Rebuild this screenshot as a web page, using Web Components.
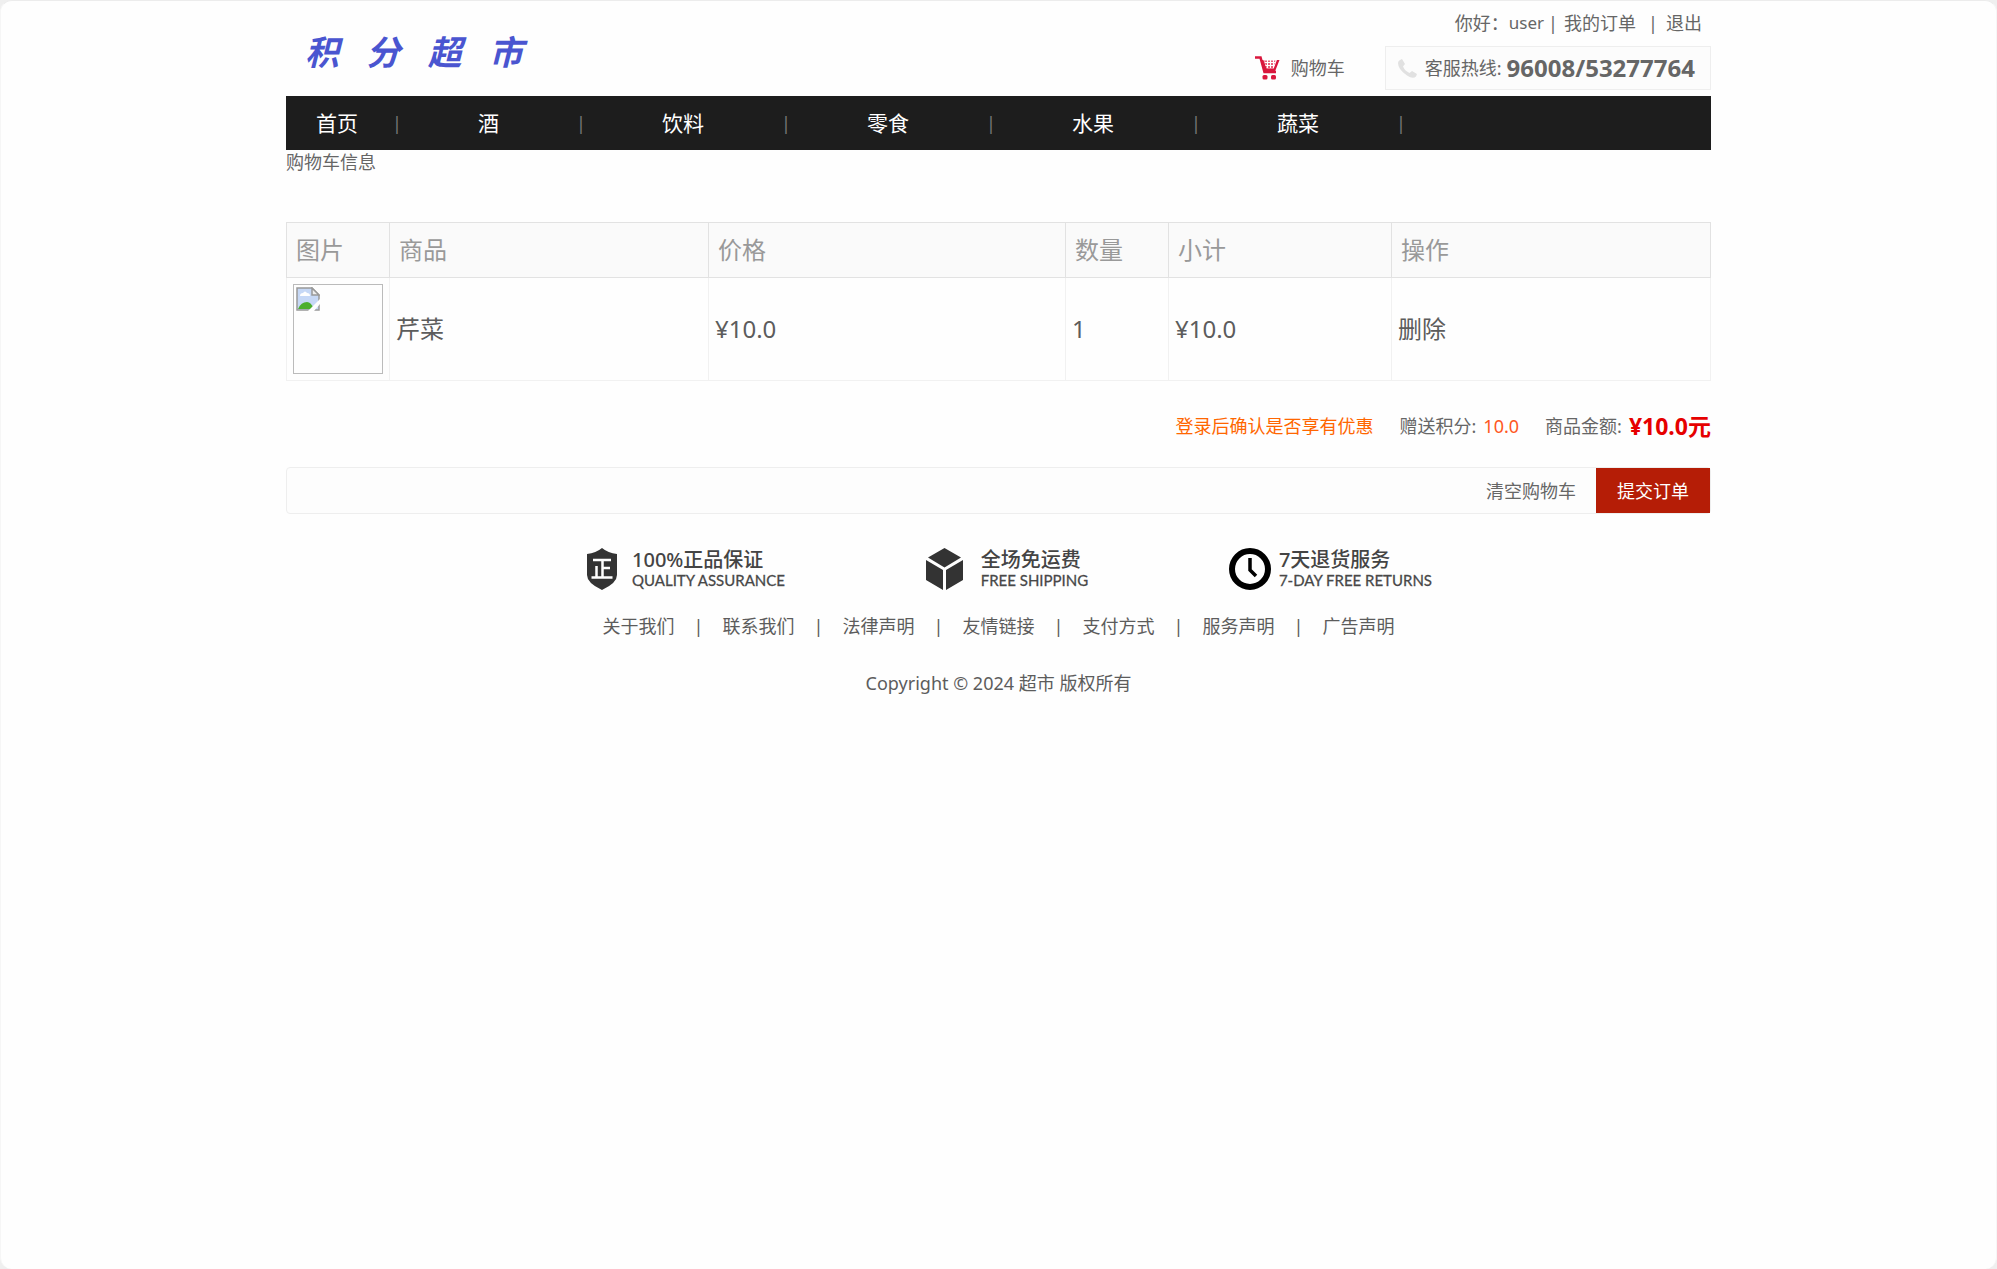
<!DOCTYPE html>
<html lang="zh-CN">
<head>
<meta charset="utf-8">
<title>购物车</title>
<style>
html{background:#efefef}
body{margin:0;font:18px/24px "Noto Sans","Noto Sans CJK SC",sans-serif;color:#666}
</style>
</head>
<body>
<shop-page>
  <shop-header></shop-header>
  <shop-nav></shop-nav>
  <cart-table></cart-table>
  <cart-summary></cart-summary>
  <shop-footer></shop-footer>
</shop-page>
<script>
function define(name, markup) {
  const template = document.createElement('template');
  template.innerHTML = '<style>*{box-sizing:border-box}a{color:inherit;text-decoration:none}a:hover{color:#b51d06}ul{list-style:none;margin:0;padding:0}svg{display:block;flex:none}</style>' + markup;
  customElements.define(name, class extends HTMLElement {
    constructor() {
      super();
      this.attachShadow({mode: 'open'}).append(template.content.cloneNode(true));
    }
  });
}

define('shop-page', `
<style>
:host{display:block;min-height:100vh;box-sizing:border-box;border:1px solid #f6f6f6;border-top-color:#ececec;border-bottom:0;border-radius:12px;background:#fefefe}
main{max-width:1425px;margin:0 auto}
</style>
<main><slot></slot></main>`);

define('shop-header', `
<style>
:host{display:flex;justify-content:space-between;height:95px}
.logo{display:flex;justify-content:space-between;align-self:center;width:218px;margin-left:19px;padding-top:4px;font:italic 700 34px/44px "Noto Sans CJK SC",sans-serif;color:#4a55d0}
.logo:hover{color:#4a55d0}
.right{display:flex;flex-direction:column;align-items:flex-end;gap:11px;padding-top:10px}
.user{display:flex;padding-right:9px}
.user i{font-style:normal;width:10px;text-align:center}
.name{font-size:17px}
.name + i{margin:0 6px 0 4px}
.orders + i{margin:0 8px 0 12px}
.tools{display:flex;gap:40px;align-items:center}
.cart{display:flex;gap:11px;align-items:center}
.hot{display:flex;align-items:center;height:44px;padding:0 15px 0 12px;border:1px solid #eee;background:#fcfcfc}
.hot svg{margin-right:8px}
.hot strong{margin-left:5px;font-size:24px}
</style>
<a class="logo" href="#" aria-label="积分超市"><span>积</span><span>分</span><span>超</span><span>市</span></a>
<div class="right">
  <div class="user"><span>你好：</span><span class="name">user</span><i>|</i><a class="orders" href="#">我的订单</a><i>|</i><a href="#">退出</a></div>
  <div class="tools">
    <a class="cart" href="#">
      <svg width="25" height="24" viewBox="0 0 25 24"><path d="M0 1.5h5.5L9.5 16H21" fill="none" stroke="#d9173d" stroke-width="2.6"/><path d="M6 4 9.5 15.5H20L24.5 4h-2.6l-3.2 8.5h-7L8.4 4z" fill="#d9173d"/><path d="M9 4.5h11.5l-2.5 8h-6z" fill="#e9607a"/><path d="M10 6.5h10M10.500 9.500h9M12.500 4v8M15.500 4v8M18.500 4v8" stroke="#fff" stroke-width="1"/><rect x="7.500" y="19" width="5" height="4.500" rx="1.500" fill="#d9173d"/><rect x="16" y="19" width="5" height="4.500" rx="1.500" fill="#d9173d"/></svg>
      <span>购物车</span></a>
    <div class="hot">
      <svg width="19" height="19" viewBox="0 0 19 19"><path d="M2 1 4 0l3 5-2 2.500q2 4.500 6.500 6.500l2.500-2 5 3-1 2.500Q15 20.500 9 16.500 0 10.500 0 4 0 2 2 1z" fill="#e1e1e1"/></svg>
      <span>客服热线:</span><strong>96008/53277764</strong></div>
  </div>
</div>`);

define('shop-nav', `
<style>
:host{display:block;background:#1d1d1d;color:#fff}
ul{display:flex;height:54px;align-items:center}
li{display:flex;align-items:center}
a{padding:0 77px 0 76px;font-size:21px;line-height:54px}
li:first-child a{padding:0 34px 0 30px}
span{width:10px;text-align:center;color:#777;font-size:18px}
</style>
<nav><ul>
<li><a href="#">首页</a><span>|</span></li><li><a href="#">酒</a><span>|</span></li><li><a href="#">饮料</a><span>|</span></li><li><a href="#">零食</a><span>|</span></li><li><a href="#">水果</a><span>|</span></li><li><a href="#">蔬菜</a><span>|</span></li>
</ul></nav>`);

define('cart-table', `
<style>
:host{display:block}
.title{margin:0 0 48px;font-size:18px;font-weight:400;line-height:24px}
table{width:100%;table-layout:fixed;border-collapse:collapse;font-size:24px;line-height:32px}
th{height:55px;padding:0 9px;border:1px solid #e2e2e2;background:#fafafa;color:#999;font-weight:400;text-align:left}
td{height:103px;padding:6px;border:1px solid #f1f1f1;color:#5c5c5c}
.thumb{width:90px;height:90px;padding:2px;border:1px solid #bbb}
</style>
<h2 class="title">购物车信息</h2>
<table>
<colgroup><col style="width:103px"><col style="width:319px"><col style="width:357px"><col style="width:103px"><col style="width:223px"><col></colgroup>
<thead><tr><th>图片</th><th>商品</th><th>价格</th><th>数量</th><th>小计</th><th>操作</th></tr></thead>
<tbody><tr>
<td><div class="thumb"><svg width="24" height="24" viewBox="0 0 24 24"><path d="M1 1h15l7 7v15H1z" fill="#c6d8f6" stroke="#999" stroke-width="1.500"/><path d="M4 9q0-3 3-3 2-3 4 0 3 0 3 3z" fill="#fff"/><path d="M2 22q3-7 9-7 4 0 7 7z" fill="#4caf2f"/><path d="M16 1v7h7z" fill="#eee" stroke="#999" stroke-width="1.500"/><path d="M24 12v5l-6 7h-6z" fill="#fefefe"/></svg></div></td>
<td>芹菜</td><td>¥10.0</td><td>1</td><td>¥10.0</td><td><a href="#">删除</a></td>
</tr></tbody>
</table>`);

define('cart-summary', `
<style>
:host{display:block;padding-top:30px}
.totals{display:flex;justify-content:flex-end;align-items:center;gap:26px;height:30px}
.totals > span{display:flex;align-items:center;gap:7px}
.tip{color:#ff6600}
.points{color:#ff5722}
.totals strong{color:#e60000;font-size:23px}
.bar{display:flex;justify-content:flex-end;align-items:stretch;gap:20px;height:47px;margin-top:26px;border:1px solid #eee;border-radius:4px;background:#fdfdfd}
button{font:inherit;border:0;padding:0;background:none;color:inherit;cursor:pointer}
.submit{padding:0 21px;background:#b51d06;color:#fff}
</style>
<div class="totals"><span class="tip">登录后确认是否享有优惠</span><span>赠送积分: <span class="points">10.0</span></span><span>商品金额: <strong>¥10.0元</strong></span></div>
<div class="bar"><button type="button">清空购物车</button><button class="submit" type="button">提交订单</button></div>`);

define('service-badge', `
<style>
:host{display:flex;align-items:center;gap:var(--badge-gap,15px);color:#444}
.text{display:flex;flex-direction:column}
b{font-size:20px;line-height:22px;font-weight:500}
small{font:15px/19px Lato,sans-serif;color:#444;-webkit-text-stroke:.3px #555}
</style>
<slot name="icon"></slot><div class="text"><b><slot name="title"></slot></b><small><slot></slot></small></div>`);

define('shop-footer', `
<style>
:host{display:block;color:#5c5c5c}
.badges{display:flex;justify-content:space-between;padding:34px 279px 0 301px}
.wide{--badge-gap:18px}
.near{--badge-gap:8px}
.links{display:flex;justify-content:center;gap:19px;margin-top:24px}
.links li{display:flex;gap:19px}
.links li + li::before{content:"|";width:10px;text-align:center}
p{margin:33px 0 0;text-align:center}
</style>
<div class="badges">
<service-badge><svg slot="icon" width="30" height="42" viewBox="0 0 30 42"><path d="M0 6q9-1 15-6 6 5 15 6v21q0 8-15 15Q0 35 0 27z" fill="#333"/><path d="M6 12h18M15.500 12v17M15.500 20H23M9.500 18v11M4.500 29.500h21" fill="none" stroke="#fff" stroke-width="2.500"/></svg><span slot="title">100%正品保证</span>QUALITY ASSURANCE</service-badge>
<service-badge class="wide"><svg slot="icon" width="37" height="42" viewBox="0 0 37 42"><path d="M18.500 0 35 9.500 18.500 19.500 2 9.500zM0 12l17 10v20L0 32zM37 12 20 22v20l17-10z" fill="#333"/></svg><span slot="title">全场免运费</span>FREE SHIPPING</service-badge>
<service-badge class="near"><svg slot="icon" width="42" height="42" viewBox="0 0 42 42"><circle cx="21" cy="21" r="18" fill="none" stroke="#000" stroke-width="6"/><path d="M21 10v12l6 6" fill="none" stroke="#000" stroke-width="3.500"/></svg><span slot="title">7天退货服务</span>7-DAY FREE RETURNS</service-badge>
</div>
<ul class="links"><li><a href="#">关于我们</a></li><li><a href="#">联系我们</a></li><li><a href="#">法律声明</a></li><li><a href="#">友情链接</a></li><li><a href="#">支付方式</a></li><li><a href="#">服务声明</a></li><li><a href="#">广告声明</a></li></ul>
<p>Copyright © 2024 超市 版权所有</p>`);
</script>
</body>
</html>
